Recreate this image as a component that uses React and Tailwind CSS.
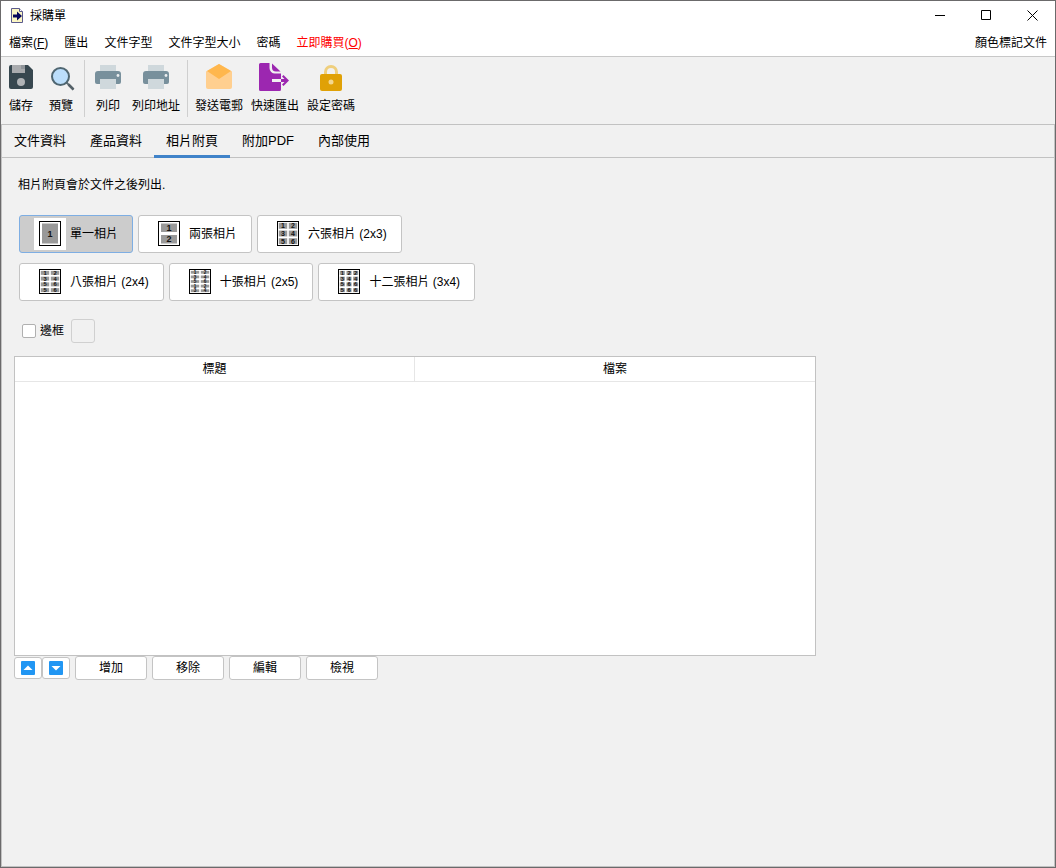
import React from 'react';

const SaveIcon = () => (
  <svg width="32" height="32" viewBox="0 0 32 32" aria-hidden="true">
    <path d="M6 4h17l5 5v17a2 2 0 0 1-2 2H6a2 2 0 0 1-2-2V6a2 2 0 0 1 2-2z" fill="#37474f" />
    <path d="M7 4h13v8H7z" fill="#a9abae" />
    <path d="M16 4h4v4h-4z" fill="#90959a" />
    <circle cx="16" cy="21" r="4" fill="#b0b3b6" />
  </svg>
);

const PreviewIcon = () => (
  <svg width="32" height="32" viewBox="0 0 32 32" aria-hidden="true">
    <path d="M21.500 21.500l7 7" stroke="#616f77" strokeWidth="2" />
    <path d="M23.500 23.500l5 5" stroke="#546067" strokeWidth="2.500" />
    <circle cx="15.500" cy="15.500" r="8.500" fill="#bbdefb" stroke="#4f6671" strokeWidth="2" />
  </svg>
);

const PrintIcon = () => (
  <svg width="32" height="32" viewBox="0 0 32 32" aria-hidden="true">
    <path d="M8 4h16v6H8z" fill="#cfd8dc" />
    <path d="M6 10h20a3 3 0 0 1 3 3v8a2 2 0 0 1-2 2H5a2 2 0 0 1-2-2v-8a3 3 0 0 1 3-3z" fill="#78909c" />
    <circle cx="26" cy="14.500" r="1.400" fill="#eceff1" />
    <path d="M8 18h16v10H8z" fill="#cfd8dc" />
  </svg>
);

const MailIcon = () => (
  <svg width="32" height="32" viewBox="0 0 32 32" aria-hidden="true">
    <path d="M3 10.500L16 3l13 7.500V26a2 2 0 0 1-2 2H5a2 2 0 0 1-2-2z" fill="#ffcf8f" />
    <path d="M16 3l12 7-12 8-12-8z" fill="#ffb74d" />
  </svg>
);

const ExportIcon = () => (
  <svg width="32" height="32" viewBox="0 0 32 32" aria-hidden="true">
    <path d="M1.500 2H10.500v5a5.500 5.500 0 0 0 5.500 5.500h6V18h-9v3h9v7.500a1.500 1.500 0 0 1-1.500 1.500h-19A1.500 1.500 0 0 1 0 28.500v-25A1.500 1.500 0 0 1 1.500 2z" fill="#9c27b0" />
    <path d="M13 2.500l8.500 8H17a4 4 0 0 1-4-4z" fill="#9c27b0" />
    <path d="M22 18h3.500l-2.500-2.500 1.500-1.500 5.500 5.500-5.500 5.500-1.500-1.500L25.500 21H22z" fill="#9c27b0" />
  </svg>
);

const LockIcon = () => (
  <svg width="32" height="32" viewBox="0 0 32 32" aria-hidden="true">
    <path d="M10.500 14v-3a5.500 5.500 0 0 1 11 0v3" fill="none" stroke="#efcf7d" strokeWidth="3" />
    <rect x="5" y="13" width="22" height="17" rx="2" fill="#e0a106" />
    <circle cx="16" cy="21" r="2.500" fill="#f3d78f" />
  </svg>
);

const LayoutIcon = ({ cols, cells }) => {
  const rows = cells.length / cols;
  const w = 20 / cols;
  const h = 23 / rows;
  const padX = cols === 1 ? 2 : 0.8;
  const padY = cols === 1 ? 1.5 : 0.9;
  const size = cols === 1 ? 9 : Math.min(7, h);
  return (
    <svg width="32" height="32" viewBox="0 0 32 32" aria-hidden="true">
      <rect x="5.500" y="3.500" width="21" height="24" fill="#fff" stroke="#000" />
      {cells.map((n, i) => {
        const x = 6 + (i % cols) * w;
        const y = 4 + Math.floor(i / cols) * h;
        return (
          <g key={i}>
            <rect x={x + padX} y={y + padY} width={w - padX * 2} height={h - padY * 2} fill="#999" />
            <text
              x={x + w / 2}
              y={y + h / 2 + size * 0.36}
              fontSize={size}
              fontWeight="700"
              textAnchor="middle"
              fill="#111"
            >
              {n}
            </text>
          </g>
        );
      })}
    </svg>
  );
};

const menus = [
  { label: '檔案', hotkey: 'F' },
  { label: '匯出' },
  { label: '文件字型' },
  { label: '文件字型大小' },
  { label: '密碼' },
  { label: '立即購買', hotkey: 'O', red: true },
];

const tools = [
  [
    { label: '儲存', Icon: SaveIcon },
    { label: '預覽', Icon: PreviewIcon },
  ],
  [
    { label: '列印', Icon: PrintIcon },
    { label: '列印地址', Icon: PrintIcon },
  ],
  [
    { label: '發送電郵', Icon: MailIcon },
    { label: '快速匯出', Icon: ExportIcon },
    { label: '設定密碼', Icon: LockIcon },
  ],
];

const tabs = ['文件資料', '產品資料', '相片附頁', '附加PDF', '內部使用'];

const layouts = [
  [
    { label: '單一相片', cols: 1, cells: [1], selected: true },
    { label: '兩張相片', cols: 1, cells: [1, 2] },
    { label: '六張相片 (2x3)', cols: 2, cells: [1, 2, 3, 4, 5, 6] },
  ],
  [
    { label: '八張相片 (2x4)', cols: 2, cells: [1, 2, 3, 4, 5, 6, 5, 6] },
    { label: '十張相片 (2x5)', cols: 2, cells: [1, 2, 3, 4, 5, 6, 1, 2, 3, 4] },
    { label: '十二張相片 (3x4)', cols: 3, cells: [1, 2, 2, 3, 4, 4, 5, 6, 6, 5, 6, 6] },
  ],
];

const TitleBar = () => (
  <header className="flex h-7 items-center justify-between bg-white pl-2">
    <div className="flex items-center gap-1 pt-px">
      <svg width="16" height="16" viewBox="0 0 16 16" aria-hidden="true">
        <path d="M2.500.5h8l3 3v11h-11z" fill="#fbf6c4" stroke="#5a5a8c" />
        <path d="M10.500.5v3h3" fill="#fff" stroke="#5a5a8c" />
        <path d="M4 6.500h4V3.500l5 4.500-5 4.500v-3H4z" fill="#06065c" />
      </svg>
      <h1 className="pt-px pl-px text-xs">採購單</h1>
    </div>
    <div className="flex">
      <button type="button" aria-label="最小化" className="flex h-7 w-[46px] items-center justify-center">
        <svg width="11" height="11" viewBox="0 0 11 11"><path d="M0 5.500h10" stroke="#000" /></svg>
      </button>
      <button type="button" aria-label="最大化" className="flex h-7 w-[46px] items-center justify-center">
        <svg width="11" height="11" viewBox="0 0 11 11"><path d="M.5.5h9v9h-9z" fill="none" stroke="#000" /></svg>
      </button>
      <button type="button" aria-label="關閉" className="flex h-7 w-[46px] items-center justify-center">
        <svg width="11" height="11" viewBox="0 0 11 11"><path d="M.5.5l10 10M10.500.5l-10 10" stroke="#000" /></svg>
      </button>
    </div>
  </header>
);

const MenuBar = () => (
  <nav className="flex h-7 items-center justify-between border-b border-[#c8c8c8] bg-white px-2 pt-px">
    <div className="flex gap-4">
      {menus.map((m) => (
        <button key={m.label} type="button" className={m.red ? 'text-[#ff0000]' : ''}>
          {m.label}
          {m.hotkey && (
            <>
              (<span className="underline">{m.hotkey}</span>)
            </>
          )}
        </button>
      ))}
    </div>
    <button type="button">顏色標記文件</button>
  </nav>
);

const Toolbar = () => (
  <div className="flex h-[67px] pt-[3px]">
    {tools.map((group, i) => (
      <React.Fragment key={i}>
        {i > 0 && <div className="mx-[3px] mb-[7px] w-px bg-[#cfcfcf]"></div>}
        {group.map(({ label, Icon }) => (
          <button key={label} type="button" className="flex min-w-10 flex-col items-center px-1 pt-px">
            <Icon />
            <span className="pt-[5px]">{label}</span>
          </button>
        ))}
      </React.Fragment>
    ))}
  </div>
);

const ArrowButton = ({ down }) => (
  <button
    type="button"
    aria-label={down ? '下移' : '上移'}
    className="flex h-[22px] w-7 items-center justify-center rounded-[3px] border border-[#c4c4c4] bg-white"
  >
    <svg width="14" height="14" viewBox="0 0 14 14" aria-hidden="true">
      <rect width="14" height="14" rx="1" fill="#2196f3" />
      <path d={down ? 'M2.500 5h9L7 9.500z' : 'M2.500 9h9L7 4.500z'} fill="#fff" />
    </svg>
  </button>
);

const PhotoPane = () => (
  <section className="px-3 pt-[19px]">
    <p className="pl-1">相片附頁會於文件之後列出.</p>

    {/* Layout choices */}
    <div className="flex flex-col gap-[10px] pt-[22px] pl-[5px]">
      {layouts.map((row, i) => (
        <div key={i} className="flex gap-[5px]">
          {row.map((l) => (
            <button
              key={l.label}
              type="button"
              aria-pressed={!!l.selected}
              className={`flex h-[38px] items-center gap-1 rounded-[3px] border px-[14px] whitespace-nowrap ${
                l.selected ? 'border-[#7eaee3] bg-[#cccccc]' : 'border-[#c4c4c4] bg-white'
              }`}
            >
              <span className="bg-white">
                <LayoutIcon cols={l.cols} cells={l.cells} />
              </span>
              {l.label}
            </button>
          ))}
        </div>
      ))}
    </div>

    {/* Border option */}
    <div className="flex items-center gap-[7px] pt-[18px] pl-2">
      <label className="flex items-center gap-1">
        <input
          type="checkbox"
          className="size-[14px] appearance-none rounded-[2px] border border-[#b0b0b0] bg-white checked:bg-[#4083c9]"
        />
        邊框
      </label>
      <button
        type="button"
        disabled
        aria-label="邊框顏色"
        className="size-6 rounded-[3px] border border-[#d0d0d0]"
      ></button>
    </div>

    {/* Photo list */}
    <div className="mt-[13px] h-[300px] w-full max-w-[802px] border border-[#c2c2c2] bg-white">
      <table className="w-full table-fixed border-separate border-spacing-0">
        <thead>
          <tr className="h-[25px]">
            <th className="border-r border-b border-[#e6e6e6] p-0 font-normal">標題</th>
            <th className="border-b border-[#e6e6e6] p-0 font-normal">檔案</th>
          </tr>
        </thead>
        <tbody></tbody>
      </table>
    </div>

    <div className="flex items-center gap-[5px]">
      <div className="flex">
        <ArrowButton />
        <ArrowButton down />
      </div>
      {['增加', '移除', '編輯', '檢視'].map((label) => (
        <button
          key={label}
          type="button"
          className="h-6 w-[72px] rounded-[3px] border border-[#c4c4c4] bg-white"
        >
          {label}
        </button>
      ))}
    </div>
  </section>
);

const App = () => {
  return (
    <div className="flex min-h-screen flex-col border border-[#6b6a6b] bg-[#f1f1f1] font-['Liberation_Sans','Noto_Sans_CJK_TC',sans-serif] text-xs text-black">
      <TitleBar />
      <MenuBar />
      <Toolbar />
      <main className="flex-1 border border-[#c2c2c2]">
        <div role="tablist" className="flex h-[33px] border-b border-[#c2c2c2] text-[13px]">
          {tabs.map((tab) => (
            <button
              key={tab}
              type="button"
              role="tab"
              aria-selected={tab === '相片附頁'}
              className={`-mb-px border-b-3 px-3 pt-[2px] ${
                tab === '相片附頁' ? 'border-[#4083c9]' : 'border-transparent'
              }`}
            >
              {tab}
            </button>
          ))}
        </div>
        <PhotoPane />
      </main>
    </div>
  );
};

export default App;
